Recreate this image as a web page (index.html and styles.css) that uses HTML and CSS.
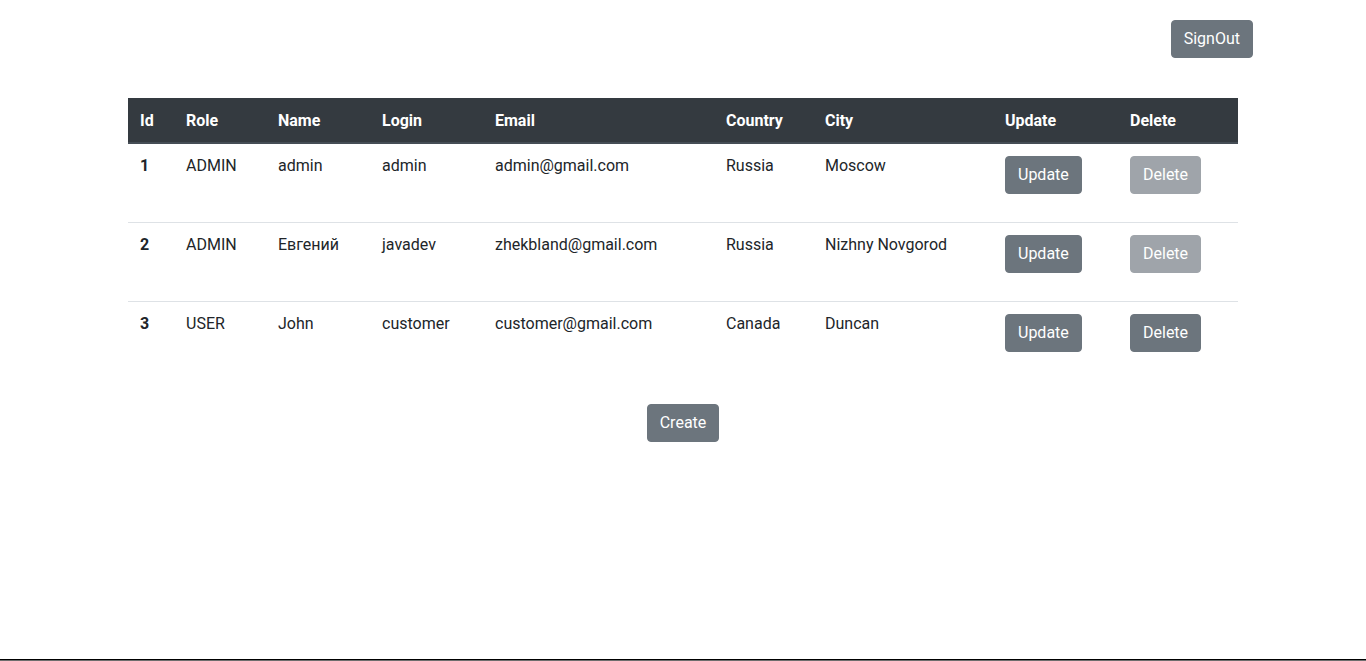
FILE: index.html
```html
<!DOCTYPE html>
<html lang="en">
<head>
<meta charset="utf-8">
<title>Users</title>
<link rel="stylesheet" href="styles.css">
</head>
<body>
<div class="page">
  <div class="container">
    <div class="topbar">
      <button class="btn">SignOut</button>
    </div>
    <table class="users">
      <colgroup>
        <col class="c-id"><col class="c-role"><col class="c-name"><col class="c-login"><col class="c-email"><col class="c-country"><col class="c-city"><col class="c-upd"><col class="c-del">
      </colgroup>
      <thead>
        <tr><th>Id</th><th>Role</th><th>Name</th><th>Login</th><th>Email</th><th>Country</th><th>City</th><th>Update</th><th>Delete</th></tr>
      </thead>
      <tbody>
        <tr><th>1</th><td>ADMIN</td><td>admin</td><td>admin</td><td>admin@gmail.com</td><td>Russia</td><td>Moscow</td><td><button class="btn row-btn">Update</button></td><td><button class="btn row-btn" disabled>Delete</button></td></tr>
        <tr><th>2</th><td>ADMIN</td><td>Евгений</td><td>javadev</td><td>zhekbland@gmail.com</td><td>Russia</td><td>Nizhny Novgorod</td><td><button class="btn row-btn">Update</button></td><td><button class="btn row-btn" disabled>Delete</button></td></tr>
        <tr><th>3</th><td>USER</td><td>John</td><td>customer</td><td>customer@gmail.com</td><td>Canada</td><td>Duncan</td><td><button class="btn row-btn">Update</button></td><td><button class="btn row-btn">Delete</button></td></tr>
      </tbody>
    </table>
    <div class="actions">
      <button class="btn">Create</button>
    </div>
  </div>
  <div class="taskbar"></div>
</div>
</body>
</html>
```
FILE: styles.css
```css
* { box-sizing: border-box; }
html, body { margin: 0; padding: 0; }
body {
  font-family: Roboto, "Liberation Sans", sans-serif;
  font-size: 16px;
  line-height: 24px;
  color: #212529;
  background: #fff;
}
.page {
  height: 661px;
  display: flex;
  flex-direction: column;
}
.container {
  width: 1140px;
  margin: 0 auto;
  padding: 0 15px;
}
.topbar {
  display: flex;
  justify-content: flex-end;
  margin-right: -15px;
  padding-top: 20px;
  margin-bottom: 40px;
}
.btn {
  font-family: inherit;
  font-size: 16px;
  line-height: 24px;
  padding: 6px 12px;
  height: 38px;
  border: 1px solid #6c757d;
  border-radius: 4px;
  background: #6c757d;
  color: #fff;
  cursor: pointer;
}
.btn:disabled { opacity: .65; cursor: default; }
.row-btn { display: block; margin-top: 2px; }
.users {
  width: 1110px;
  border-collapse: collapse;
  table-layout: fixed;
}
.c-id { width: 46px; }
.c-role { width: 92px; }
.c-name { width: 104px; }
.c-login { width: 113px; }
.c-email { width: 231px; }
.c-country { width: 99px; }
.c-city { width: 180px; }
.c-upd { width: 125px; }
.c-del { width: 120px; }
.users thead th {
  background: #343a40;
  color: #fff;
  font-weight: 700;
  text-align: left;
  padding: 11px 12px 9px;
  border-bottom: 2px solid #454d55;
}
.users tbody th,
.users tbody td {
  text-align: left;
  vertical-align: top;
  padding: 10px 12px 28px;
  border-top: 1px solid #dee2e6;
}
.users tbody tr:first-child th,
.users tbody tr:first-child td { border-top: none; }
.users tbody th { font-weight: 700; }
.actions {
  display: flex;
  justify-content: center;
  margin-top: 24px;
}
.taskbar {
  margin-top: auto;
  height: 2px;
  border-top: 1px solid #000;
  background: #6e6e6e;
}
```
